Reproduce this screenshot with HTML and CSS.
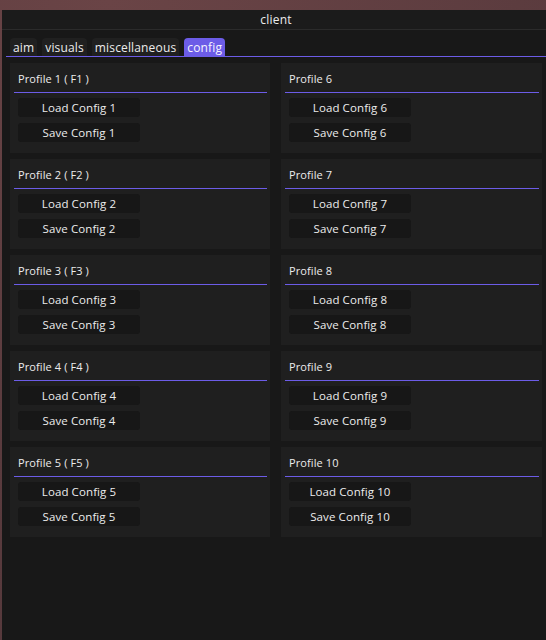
FILE: index.html
```html
<!DOCTYPE html>
<html>
<head>
<meta charset="utf-8">
<link rel="stylesheet" href="styles.css">
</head>
<body>
<div class="window">
  <div class="titlebar">client</div>
  <div class="content">
    <div class="tabs">
      <div class="tab">aim</div>
      <div class="tab">visuals</div>
      <div class="tab">miscellaneous</div>
      <div class="tab active">config</div>
    </div>
    <div class="grid">
      <div class="panel"><div class="header">Profile 1 ( F1 )</div><div class="btns"><div class="btn">Load Config 1</div><div class="btn">Save Config 1</div></div></div>
      <div class="panel"><div class="header">Profile 6</div><div class="btns"><div class="btn">Load Config 6</div><div class="btn">Save Config 6</div></div></div>
      <div class="panel"><div class="header">Profile 2 ( F2 )</div><div class="btns"><div class="btn">Load Config 2</div><div class="btn">Save Config 2</div></div></div>
      <div class="panel"><div class="header">Profile 7</div><div class="btns"><div class="btn">Load Config 7</div><div class="btn">Save Config 7</div></div></div>
      <div class="panel"><div class="header">Profile 3 ( F3 )</div><div class="btns"><div class="btn">Load Config 3</div><div class="btn">Save Config 3</div></div></div>
      <div class="panel"><div class="header">Profile 8</div><div class="btns"><div class="btn">Load Config 8</div><div class="btn">Save Config 8</div></div></div>
      <div class="panel"><div class="header">Profile 4 ( F4 )</div><div class="btns"><div class="btn">Load Config 4</div><div class="btn">Save Config 4</div></div></div>
      <div class="panel"><div class="header">Profile 9</div><div class="btns"><div class="btn">Load Config 9</div><div class="btn">Save Config 9</div></div></div>
      <div class="panel"><div class="header">Profile 5 ( F5 )</div><div class="btns"><div class="btn">Load Config 5</div><div class="btn">Save Config 5</div></div></div>
      <div class="panel"><div class="header">Profile 10</div><div class="btns"><div class="btn">Load Config 10</div><div class="btn">Save Config 10</div></div></div>
    </div>
  </div>
</div>
</body>
</html>
```
FILE: styles.css
```css
html, body {
  margin: 0;
  padding: 0;
  height: 100%;
}
body {
  background: #5d3d40;
  background-image: radial-gradient(circle at 20% 0%, #6a4446 0%, #5a3b3e 60%, #54383b 100%);
  font-family: "Open Sans", "Liberation Sans", sans-serif;
  color: #ececec;
  overflow: hidden;
}
.window {
  margin: 10px 0 0 2px;
  height: 630px;
  background: #181818;
}
.titlebar {
  height: 19px;
  line-height: 19px;
  background: #1b1b1b;
  border-bottom: 1px solid #2b2b2b;
  text-align: center;
  font-size: 12px;
  letter-spacing: 0.2px;
  padding-left: 4px;
}
.content {
  padding: 8px 0 0 4px;
}
.tabs {
  display: flex;
  gap: 5px;
  padding-left: 4px;
  height: 18px;
  border-bottom: 1px solid #6c5ce7;
}
.tab {
  height: 18px;
  line-height: 19px;
  padding: 0 3px;
  background: #202020;
  border-radius: 4px 4px 0 0;
  font-size: 12px;
  letter-spacing: 0.15px;
}
.tab.active {
  background: #6c5ce7;
  color: #f6f4ff;
}
.grid {
  margin: 6px 0 0 4px;
  width: 532px;
  display: grid;
  grid-template-columns: 260px 261px;
  column-gap: 11px;
  row-gap: 6px;
}
.panel {
  background: #1f1f1f;
  height: 90px;
  box-sizing: border-box;
}
.header {
  margin: 0 3px 0 4px;
  height: 29px;
  line-height: 31px;
  padding-left: 4px;
  border-bottom: 1px solid #6c5ce7;
  font-size: 11px;
  letter-spacing: 0.1px;
}
.btns {
  display: flex;
  flex-direction: column;
  gap: 6px;
  padding: 5px 0 0 8px;
}
.btn {
  width: 122px;
  height: 19px;
  line-height: 19px;
  background: #171717;
  border-radius: 3px;
  text-align: center;
  font-size: 11.5px;
  letter-spacing: 0.1px;
}
```
